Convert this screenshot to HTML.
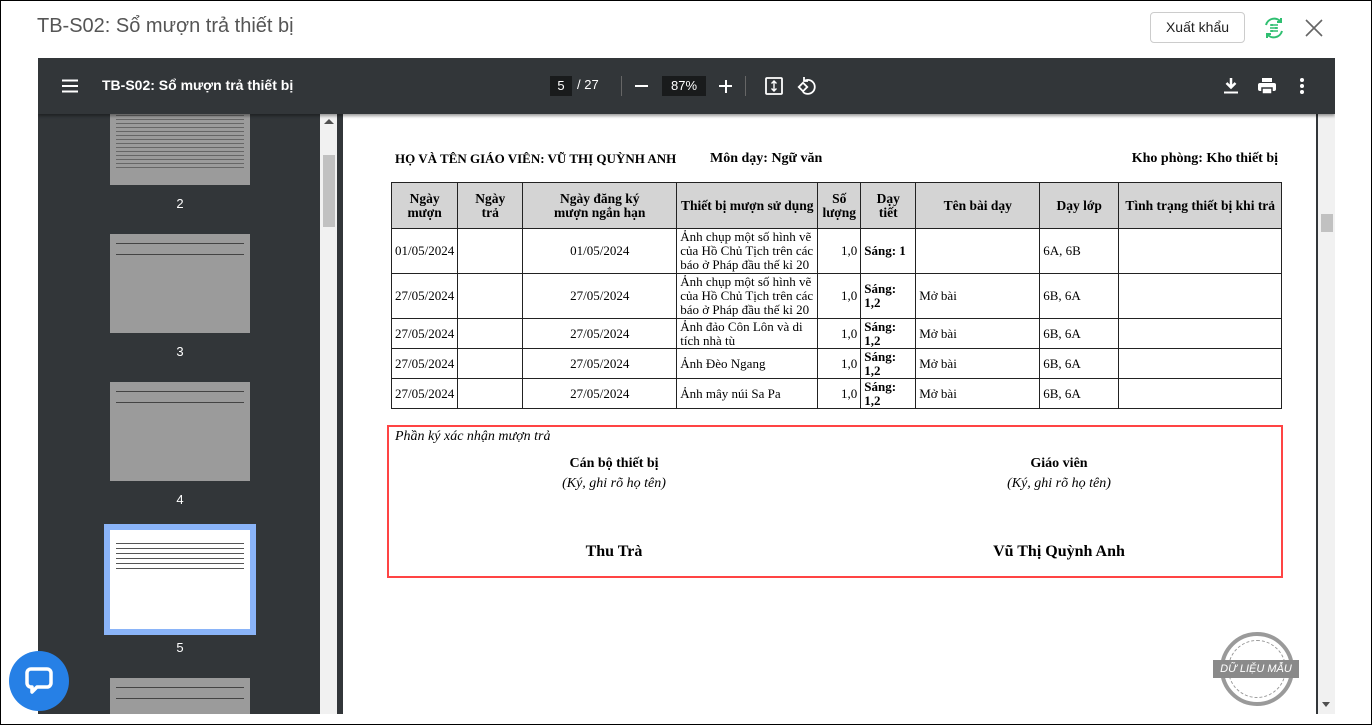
<!DOCTYPE html>
<html><head><meta charset="utf-8"><style>
*{margin:0;padding:0;box-sizing:border-box}
body{width:1372px;height:725px;overflow:hidden;background:#fff;font-family:"Liberation Sans",sans-serif;position:relative}
.a{position:absolute}
.frame{left:0;top:0;width:1372px;height:725px;border:1px solid #000;z-index:10;pointer-events:none}
.title{left:37px;top:15px;font-size:20px;color:#555}
.btn{left:1150px;top:12px;width:95px;height:31px;border:1px solid #ccc;border-radius:4px;font-size:14px;color:#222;text-align:center;line-height:29px}
.viewer{left:38px;top:58px;width:1297px;height:656px;background:#323639;overflow:hidden}
.tb{left:0;top:0;width:1297px;height:56px;background:#323639;box-shadow:0 2px 3px rgba(0,0,0,.4);z-index:2;color:#fff}
.thumb{position:absolute;left:72px;width:140px;background:#9b9b9b}
.lbl{position:absolute;left:72px;width:140px;text-align:center;color:#fff;font-size:13px}
.page{left:305px;top:56px;width:973px;height:600px;background:#fff;font-family:"Liberation Serif",serif;color:#000}
table{position:absolute;left:48px;top:68px;border-collapse:collapse;font-size:13px}
td,th{border:1.5px solid #222;padding:0 3px;line-height:14px}
th{background:#d4d4d4;font-weight:bold;text-align:center;font-size:13.5px}
.c{text-align:center}.r{text-align:right}.b{font-weight:bold}
</style></head><body>
<div class="a frame"></div>
<div class="a title">TB-S02: Sổ mượn trả thiết bị</div>
<div class="a btn">Xuất khẩu</div>
<svg class="a" style="left:1262px;top:16px" width="24" height="24" viewBox="0 0 24 24" fill="none" stroke="#2fbf71" stroke-width="2"><path d="M4 9a8.5 8.5 0 0 1 15-3"/><path d="M20 15a8.5 8.5 0 0 1-15 3"/><path d="M19 2v4h-4M5 22v-4h4"/><path d="M8 9h8M8 12h8M8 15h8M10 8v2M14 11v2M10 14v2" stroke-width="1.6"/></svg>
<svg class="a" style="left:1305px;top:19px" width="18" height="18" viewBox="0 0 18 18" stroke="#666" stroke-width="1.6"><path d="M1 1L17 17M17 1L1 17"/></svg>

<div class="a viewer">
 <div class="a tb">
  <svg class="a" style="left:24px;top:21px" width="16" height="14"><path d="M0 1.5h16M0 7h16M0 12.5h16" stroke="#fff" stroke-width="2"/></svg>
  <div class="a" style="left:64px;top:19px;font-size:14px;font-weight:bold">TB-S02: Sổ mượn trả thiết bị</div>
  <div class="a" style="left:512px;top:18px;width:22px;height:20px;background:#191b1c;font-size:13px;text-align:center;line-height:20px">5</div>
  <div class="a" style="left:539px;top:19px;font-size:13px">/ 27</div>
  <div class="a" style="left:583px;top:18px;width:1px;height:20px;background:#666"></div>
  <div class="a" style="left:597px;top:27px;width:13px;height:2px;background:#fff"></div>
  <div class="a" style="left:624px;top:18px;width:44px;height:20px;background:#191b1c;font-size:13px;text-align:center;line-height:20px">87%</div>
  <div class="a" style="left:681px;top:27px;width:13px;height:2px;background:#fff"></div>
  <div class="a" style="left:686.5px;top:21.5px;width:2px;height:13px;background:#fff"></div>
  <div class="a" style="left:707px;top:18px;width:1px;height:20px;background:#666"></div>
  <svg class="a" style="left:727px;top:19px" width="18" height="18" fill="none" stroke="#fff" stroke-width="1.8"><rect x="1" y="1" width="16" height="16" rx="1"/><path d="M9 4v10M6.5 6.5L9 4l2.5 2.5M6.5 11.5L9 14l2.5-2.5" stroke-width="1.4"/></svg>
  <svg class="a" style="left:759px;top:18px" width="20" height="20" fill="none" stroke="#fff" stroke-width="1.8"><path d="M7 5a7 7 0 1 1-1 11"/><path d="M7 1v4h4" /><rect x="3" y="8" width="6" height="6" transform="rotate(45 6 11)"/></svg>
  <svg class="a" style="left:1186px;top:20px" width="14" height="16"><path d="M7 0v9M2.5 5L7 9.5 11.5 5" stroke="#fff" stroke-width="2.5" fill="none"/><path d="M0 14.5h14" stroke="#fff" stroke-width="2"/></svg>
  <svg class="a" style="left:1220px;top:20px" width="18" height="16" fill="#fff"><rect x="4" y="0" width="10" height="4"/><rect x="0" y="5" width="18" height="8" rx="2"/><rect x="4" y="10" width="10" height="6" fill="#fff" stroke="#323639" stroke-width="1.5"/></svg>
  <svg class="a" style="left:1262px;top:20px" width="4" height="16" fill="#fff"><circle cx="2" cy="2" r="2"/><circle cx="2" cy="8" r="2"/><circle cx="2" cy="14" r="2"/></svg>
 </div>
 <div class="thumb" style="top:0;height:127px;background:repeating-linear-gradient(#9b9b9b 0 3px,#666 3px 4px);border:6px solid #9b9b9b;border-bottom-width:14px"></div>
 <div class="lbl" style="top:138px">2</div>
 <div class="thumb" style="top:176px;height:99px"><div style="margin:9px 6px;height:12px;border:1px solid #444;border-width:1px 0"></div></div>
 <div class="lbl" style="top:286px">3</div>
 <div class="thumb" style="top:324px;height:99px"><div style="margin:9px 6px;height:12px;border:1px solid #444;border-width:1px 0"></div></div>
 <div class="lbl" style="top:434px">4</div>
 <div class="a" style="left:66px;top:466px;width:152px;height:111px;background:#fff;border:6px solid #8ab4f8"><div style="margin:9px 6px;height:30px;background:repeating-linear-gradient(#fff 0 4px,#555 4px 5px)"></div></div>
 <div class="lbl" style="top:582px">5</div>
 <div class="thumb" style="top:620px;height:40px"><div style="margin:9px 6px;height:12px;border:1px solid #444;border-width:1px 0"></div></div>
 <div class="a" style="left:282px;top:56px;width:17px;height:600px;background:#f1f1f1"></div>
 <div class="a" style="left:285px;top:97px;width:12px;height:72px;background:#c1c1c1"></div>
 <div class="a" style="left:286px;top:61px;border:5px solid transparent;border-bottom:5px solid #505050;border-top:0"></div>
 <div class="a" style="left:1280px;top:56px;width:17px;height:600px;background:#f1f1f1"></div>
 <div class="a" style="left:1283px;top:156px;width:12px;height:18px;background:#c1c1c1"></div>
 <div class="a" style="left:1284px;top:644px;border:4px solid transparent;border-top:5px solid #505050;border-bottom:0"></div>
 <div class="a page">
  <div class="a b" style="left:52px;top:37px;font-size:13px">HỌ VÀ TÊN GIÁO VIÊN: VŨ THỊ QUỲNH ANH</div>
  <div class="a b" style="left:367px;top:37px;font-size:14px">Môn dạy: Ngữ văn</div>
  <div class="a b" style="right:38px;top:37px;font-size:14px">Kho phòng: Kho thiết bị</div>
  <table>
   <tr style="height:46px"><th style="width:66px">Ngày<br>mượn</th><th style="width:65px">Ngày<br>trả</th><th style="width:154px">Ngày đăng ký<br>mượn ngắn hạn</th><th style="width:141px">Thiết bị mượn sử dụng</th><th style="width:43px">Số<br>lượng</th><th style="width:55px">Dạy<br>tiết</th><th style="width:124px">Tên bài dạy</th><th style="width:79px">Dạy lớp</th><th style="width:163px">Tình trạng thiết bị khi trả</th></tr>
   <tr style="height:45px"><td>01/05/2024</td><td></td><td class="c">01/05/2024</td><td>Ảnh chụp một số hình vẽ của Hồ Chủ Tịch trên các báo ở Pháp đầu thế kỉ 20</td><td class="r">1,0</td><td class="b">Sáng: 1</td><td></td><td>6A, 6B</td><td></td></tr>
   <tr style="height:45px"><td>27/05/2024</td><td></td><td class="c">27/05/2024</td><td>Ảnh chụp một số hình vẽ của Hồ Chủ Tịch trên các báo ở Pháp đầu thế kỉ 20</td><td class="r">1,0</td><td class="b">Sáng:<br>1,2</td><td>Mở bài</td><td>6B, 6A</td><td></td></tr>
   <tr style="height:30px"><td>27/05/2024</td><td></td><td class="c">27/05/2024</td><td>Ảnh đảo Côn Lôn và di tích nhà tù</td><td class="r">1,0</td><td class="b">Sáng:<br>1,2</td><td>Mở bài</td><td>6B, 6A</td><td></td></tr>
   <tr style="height:30px"><td>27/05/2024</td><td></td><td class="c">27/05/2024</td><td>Ảnh Đèo Ngang</td><td class="r">1,0</td><td class="b">Sáng:<br>1,2</td><td>Mở bài</td><td>6B, 6A</td><td></td></tr>
   <tr style="height:30px"><td>27/05/2024</td><td></td><td class="c">27/05/2024</td><td>Ảnh mây núi Sa Pa</td><td class="r">1,0</td><td class="b">Sáng:<br>1,2</td><td>Mở bài</td><td>6B, 6A</td><td></td></tr>
  </table>
  <div class="a" style="left:44px;top:311px;width:896px;height:153px;border:2px solid #f44"></div>
  <div class="a" style="left:52px;top:315px;font-size:14px;font-style:italic">Phần ký xác nhận mượn trả</div>
  <div class="a b" style="left:171px;top:342px;width:200px;text-align:center;font-size:14px">Cán bộ thiết bị</div>
  <div class="a" style="left:171px;top:362px;width:200px;text-align:center;font-size:14px;font-style:italic">(Ký, ghi rõ họ tên)</div>
  <div class="a b" style="left:171px;top:429px;width:200px;text-align:center;font-size:16px">Thu Trà</div>
  <div class="a b" style="left:616px;top:342px;width:200px;text-align:center;font-size:14px">Giáo viên</div>
  <div class="a" style="left:616px;top:362px;width:200px;text-align:center;font-size:14px;font-style:italic">(Ký, ghi rõ họ tên)</div>
  <div class="a b" style="left:616px;top:429px;width:200px;text-align:center;font-size:16px">Vũ Thị Quỳnh Anh</div>
  <div class="a" style="left:877px;top:518px;width:74px;height:74px;border-radius:50%;border:4px solid #9a9a9a"><div style="margin:4px;height:58px;border-radius:50%;border:1px dashed #9a9a9a"></div></div>
  <div class="a" style="left:870px;top:546px;width:86px;height:18px;background:#8a8a8a;color:#fff;font-family:'Liberation Sans',sans-serif;font-size:11px;font-style:italic;text-align:center;line-height:18px">DỮ LIỆU MẪU</div>
 </div>
</div>
<div class="a" style="left:9px;top:651px;width:60px;height:60px;border-radius:50%;background:#2680e6"></div>
<svg class="a" style="left:24px;top:666px" width="30" height="30" fill="none" stroke="#fff" stroke-width="3.5"><path d="M7 3h16a4 4 0 0 1 4 4v10a4 4 0 0 1-4 4H13l-5 5v-5H7a4 4 0 0 1-4-4V7a4 4 0 0 1 4-4z" stroke-linejoin="round"/></svg>
</body></html>
